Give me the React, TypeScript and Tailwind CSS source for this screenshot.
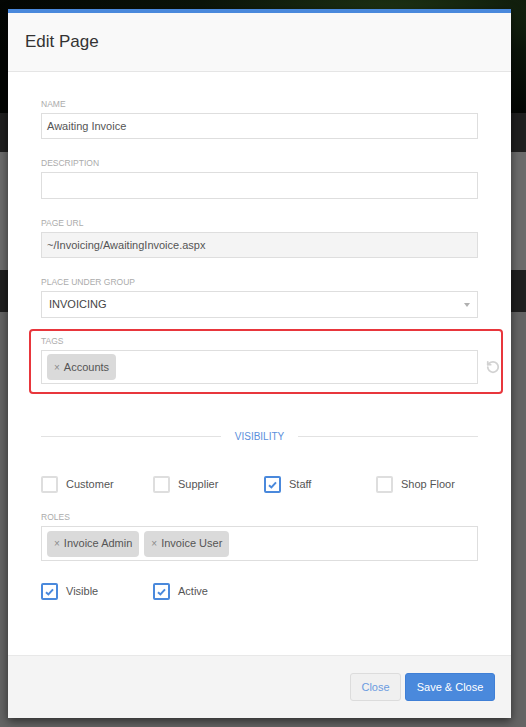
import { RotateCcw } from "lucide-react";

const font = { fontFamily: '"Liberation Sans", Arial, sans-serif' };

function Label({ children }: { children: React.ReactNode }) {
  return <div className="h-[12px] leading-[12px] text-[8.5px] uppercase text-[#ababab] mb-[3px]">{children}</div>;
}

function Chip({ children }: { children: React.ReactNode }) {
  return (
    <span className="flex h-[26px] items-center rounded-[4px] bg-[#dadada] pl-[7px] pr-[7px] text-[11px] text-[#555]">
      <span className="mr-[4px] text-[10px] text-[#8a8a8a]">×</span>
      {children}
    </span>
  );
}

function Check({ label, checked = false }: { label: string; checked?: boolean }) {
  return (
    <div className="flex items-center">
      <span
        className={`flex h-[17px] w-[17px] items-center justify-center rounded-[2px] border-2 bg-white ${
          checked ? "border-[#4a89dc]" : "border-[#dedede]"
        }`}
      >
        {checked && (
          <svg width="9" height="8" viewBox="0 0 9 8">
            <path d="M1 4.2 L3.4 6.4 L8 1.4" fill="none" stroke="#4a89dc" strokeWidth="2" />
          </svg>
        )}
      </span>
      <span className="ml-[8px] text-[11px] text-[#555]">{label}</span>
    </div>
  );
}

export default function App() {
  return (
    <div className="relative h-[727px] w-[526px] overflow-hidden flex flex-col" style={font}>
      <div className="h-[113px] bg-[radial-gradient(ellipse_at_75%_10%,#1e3314_0%,#0b1409_35%,#030503_75%)]" />
      <div className="h-[39px] bg-[#1f1f1f]" />
      <div className="h-[118px] bg-[#6b6b6b]" />
      <div className="h-[42px] bg-[#1f1f1f]" />
      <div className="flex-1 bg-[#646464]" />

      <div className="absolute left-[8px] top-[9px] flex h-[709px] w-[503px] flex-col border-t-4 border-[#4a89dc] bg-white shadow-[0_3px_9px_rgba(0,0,0,0.55)]">
        <div className="flex h-[59px] items-center border-b border-[#e5e5e5] bg-[#f9f9f9] pl-[17px]">
          <h1 className="text-[17px] text-[#333]">Edit Page</h1>
        </div>

        <div className="flex-1 pl-[33px] pr-[33px] pt-[26px]">
          <Label>Name</Label>
          <div className="flex h-[26px] items-center border border-[#dedede] px-[5px] text-[11px] text-[#555]">Awaiting Invoice</div>

          <div className="mt-[18px]">
            <Label>Description</Label>
            <div className="h-[27px] border border-[#dedede]" />
          </div>

          <div className="mt-[18px]">
            <Label>Page URL</Label>
            <div className="flex h-[26px] items-center border border-[#dedede] bg-[#f4f4f4] px-[5px] text-[11px] text-[#555]">
              ~/Invoicing/AwaitingInvoice.aspx
            </div>
          </div>

          <div className="mt-[18px]">
            <Label>Place under group</Label>
            <div className="flex h-[27px] items-center justify-between border border-[#dedede] pl-[7px] pr-[7px] text-[11px] text-[#444]">
              INVOICING
              <svg width="6" height="4" viewBox="0 0 6 4">
                <path d="M0 0 H6 L3 4 Z" fill="#b0b0b0" />
              </svg>
            </div>
          </div>

          <div className="-ml-[12px] -mr-[25px] mt-[11px] rounded-[4px] border-2 border-[#e8363c] pb-[8px] pl-[10px] pt-[4px]">
            <Label>Tags</Label>
            <div className="flex items-center">
              <div className="flex h-[34px] w-[437px] items-center border border-[#dedede] px-[5px]">
                <Chip>Accounts</Chip>
              </div>
              <RotateCcw className="ml-[8px]" size={14} strokeWidth={3} color="#d2d2d2" />
            </div>
          </div>

          <div className="mt-[36px] flex h-[12px] items-center">
            <div className="h-px flex-1 bg-[#e2e2e2]" />
            <span className="px-[14px] text-[10px] text-[#5b8fdc]">VISIBILITY</span>
            <div className="h-px flex-1 bg-[#e2e2e2]" />
          </div>

          <div className="mt-[34px] grid grid-cols-[112px_111px_112px_1fr]">
            <Check label="Customer" />
            <Check label="Supplier" />
            <Check label="Staff" checked />
            <Check label="Shop Floor" />
          </div>

          <div className="mt-[18px]">
            <Label>Roles</Label>
            <div className="flex h-[35px] items-center gap-[5px] border border-[#dedede] px-[5px]">
              <Chip>Invoice Admin</Chip>
              <Chip>Invoice User</Chip>
            </div>
          </div>

          <div className="mt-[22px] grid grid-cols-[112px_1fr]">
            <Check label="Visible" checked />
            <Check label="Active" checked />
          </div>
        </div>

        <div className="flex h-[63px] items-start justify-end gap-[4px] border-t border-[#e8e8e8] bg-[#f4f4f4] pr-[16px] pt-[17px]">
          <button className="h-[28px] w-[51px] rounded-[3px] border border-[#dcdcdc] bg-[#f0f0f0] text-[11px] text-[#6b9be0]">
            Close
          </button>
          <button className="h-[28px] w-[90px] rounded-[3px] border border-[#3f7fd6] bg-[#4a89dc] text-[11px] text-white">
            Save &amp; Close
          </button>
        </div>
      </div>
    </div>
  );
}
